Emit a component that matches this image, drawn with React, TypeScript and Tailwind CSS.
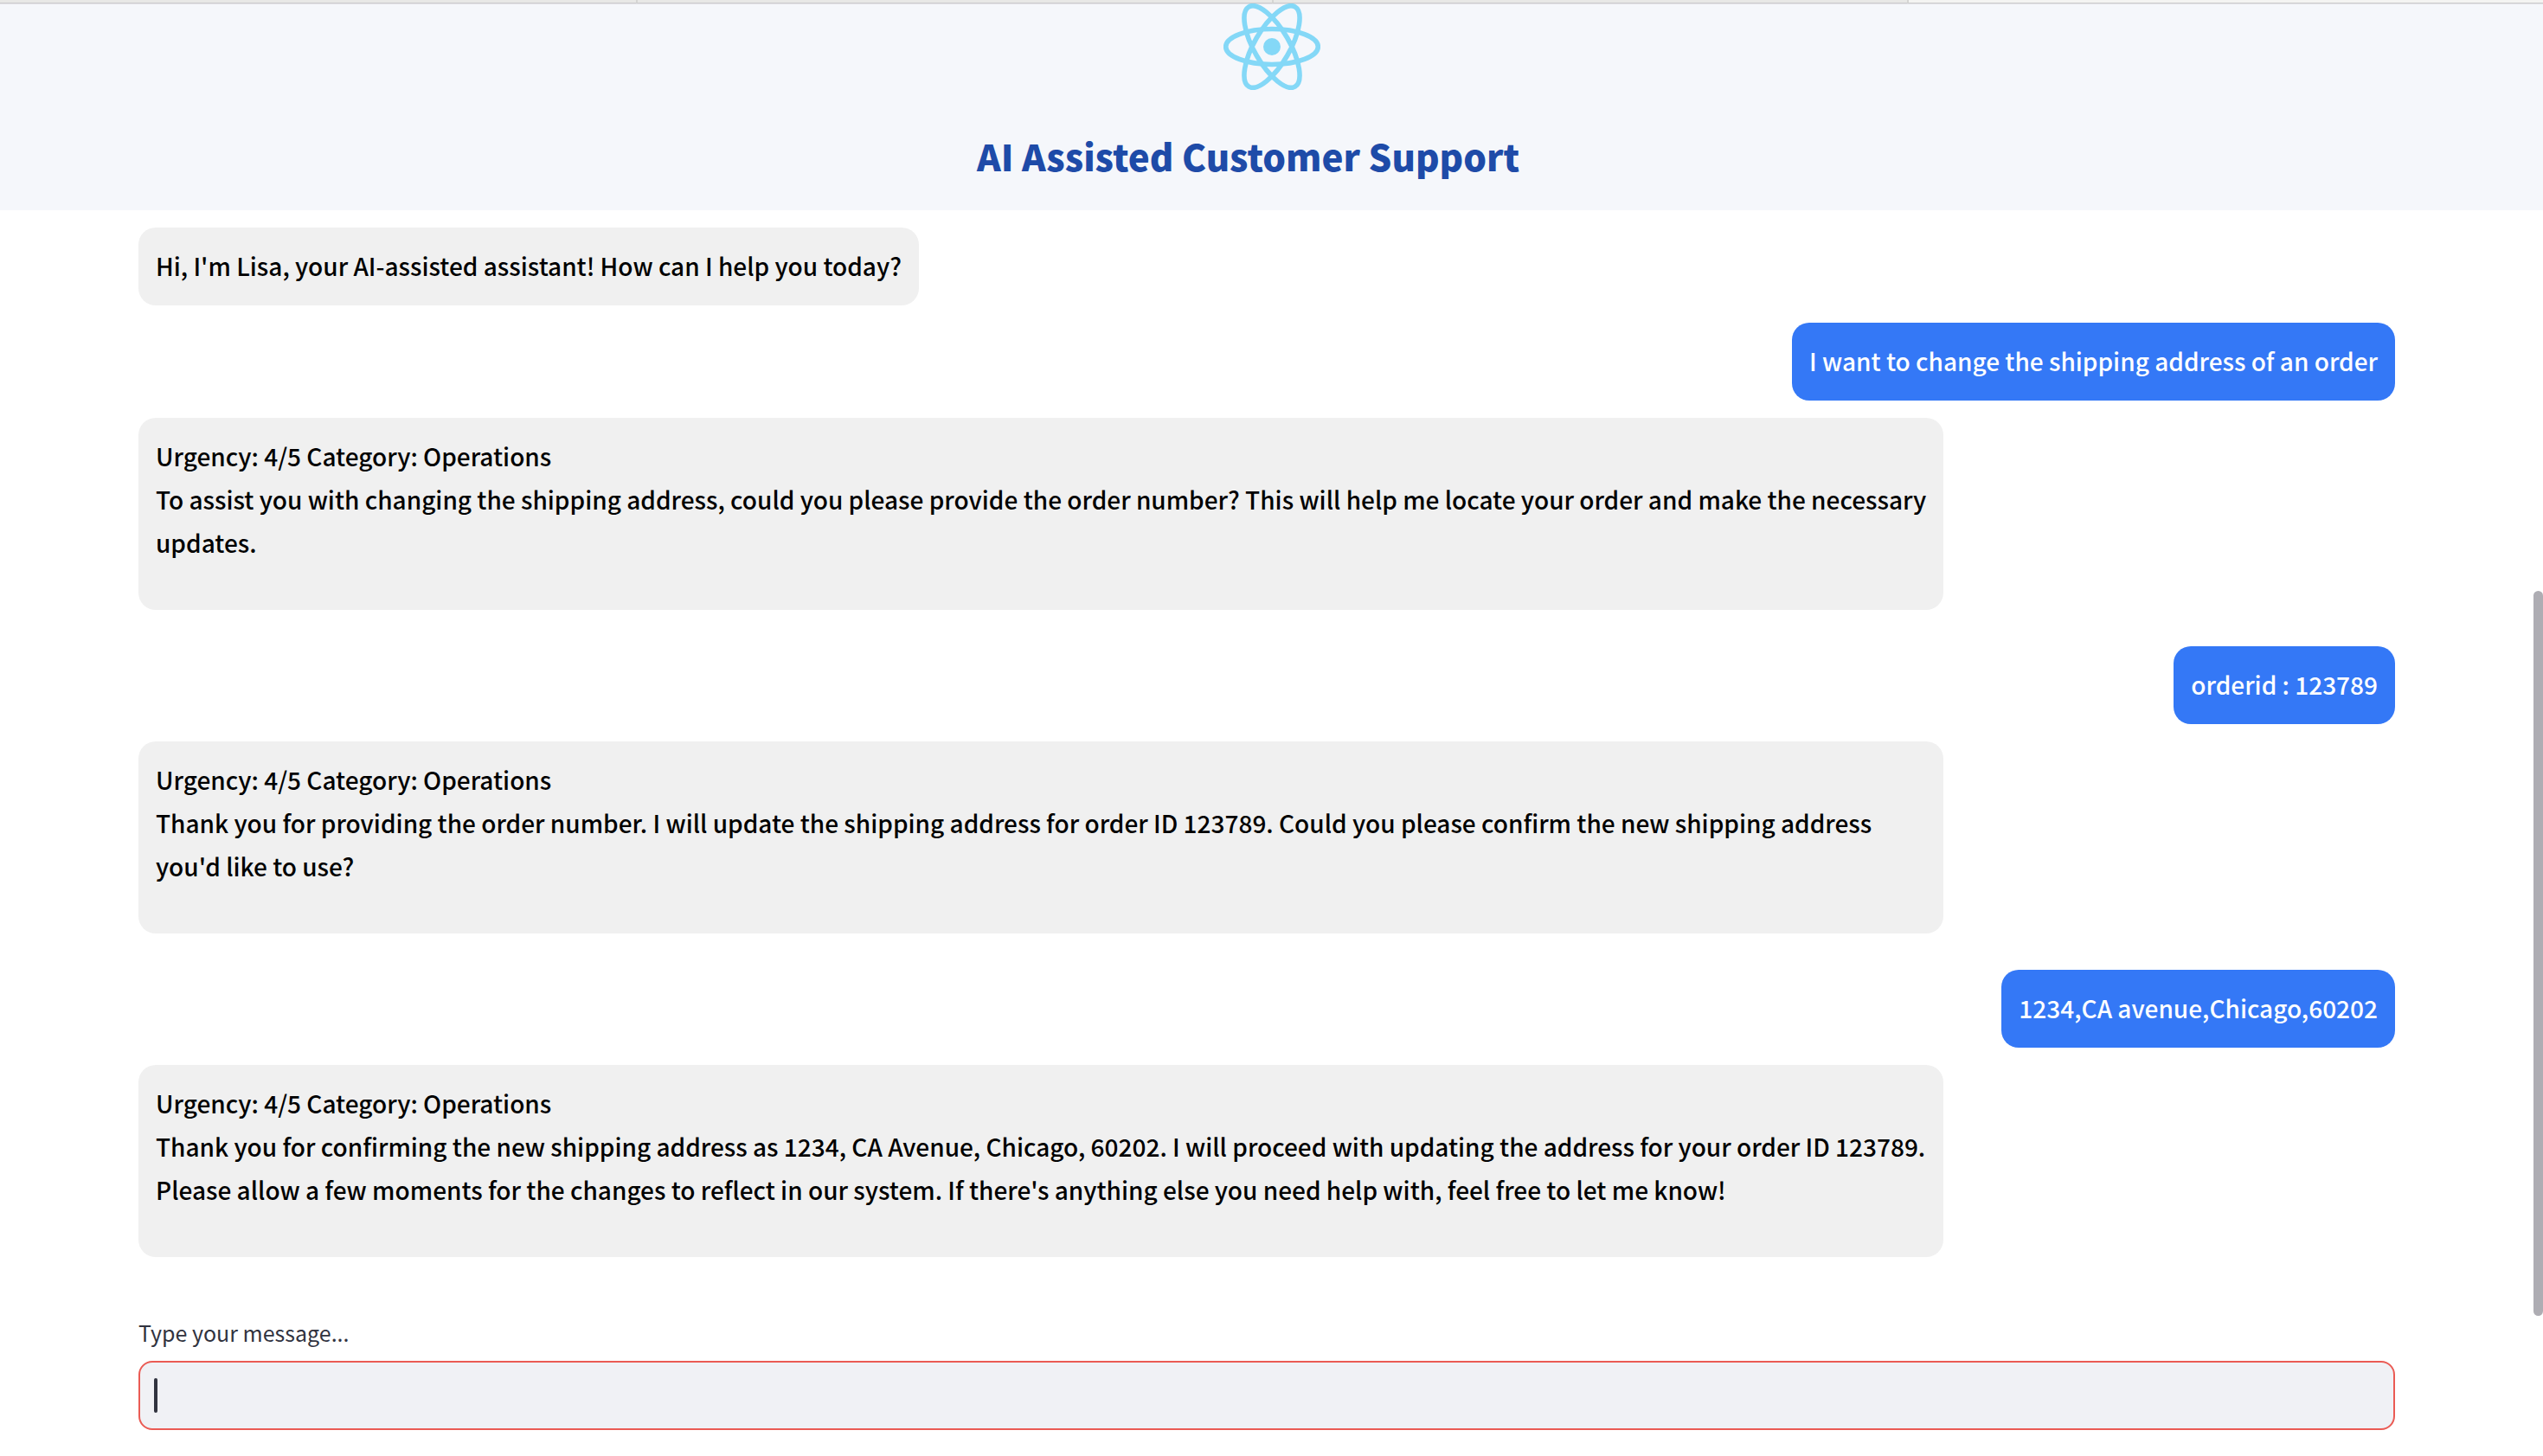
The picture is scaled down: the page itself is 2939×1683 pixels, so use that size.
import { useState } from "react";

type Message = {
  from: "assistant" | "user";
  text: string;
  meta?: string;
};

const messages: Message[] = [
  { from: "assistant", text: "Hi, I'm Lisa, your AI-assisted assistant! How can I help you today?" },
  { from: "user", text: "I want to change the shipping address of an order" },
  {
    from: "assistant",
    meta: "Urgency: 4/5 Category: Operations",
    text: "To assist you with changing the shipping address, could you please provide the order number? This will help me locate your order and make the necessary updates.",
  },
  { from: "user", text: "orderid : 123789" },
  {
    from: "assistant",
    meta: "Urgency: 4/5 Category: Operations",
    text: "Thank you for providing the order number. I will update the shipping address for order ID 123789. Could you please confirm the new shipping address you'd like to use?",
  },
  { from: "user", text: "1234,CA avenue,Chicago,60202" },
  {
    from: "assistant",
    meta: "Urgency: 4/5 Category: Operations",
    text: "Thank you for confirming the new shipping address as 1234, CA Avenue, Chicago, 60202. I will proceed with updating the address for your order ID 123789. Please allow a few moments for the changes to reflect in our system. If there's anything else you need help with, feel free to let me know!",
  },
];

function TabStrip() {
  return (
    <div className="grid h-[5px] grid-cols-4 border-b border-[#e2e2e6]">
      <div className="border-b border-b-[#cbcbcd] bg-[#e8e8e6]" />
      <div className="border-b border-l-2 border-b-[#cbcbcd] border-l-[#d5d5d3] bg-[#e8e8e6]" />
      <div className="border-b border-l-2 border-b-[#cbcbcd] border-l-[#d5d5d3] bg-[#e8e8e6]" />
      <div className="border-b border-l-2 border-b-[#cbcbcd] border-l-[#d5d5d3] bg-[#f4f4f2]" />
    </div>
  );
}

function ReactLogo() {
  return (
    <svg viewBox="-11.5 -10.23 23 20.46" className="-mt-px h-[100px] w-[112px]" role="img" aria-label="React logo">
      <circle r="2.05" fill="#84d8f7" />
      <g fill="none" stroke="#84d8f7" strokeWidth="1.15">
        <ellipse rx="10.95" ry="4.2" />
        <ellipse rx="10.95" ry="4.2" transform="rotate(60)" />
        <ellipse rx="10.95" ry="4.2" transform="rotate(120)" />
      </g>
    </svg>
  );
}

function Bubble({ message }: { message: Message }) {
  if (message.from === "user") {
    return (
      <li className="max-w-4/5 self-end rounded-[20px] bg-[#3478f6] px-5 pt-[19px] pb-[21px] text-white">
        {message.text}
      </li>
    );
  }
  if (message.meta) {
    return (
      <li className="mb-[22px] max-w-4/5 self-start rounded-[20px] bg-[#f0f0f0] pt-[19px] pr-4 pb-[53px] pl-5">
        <p>{message.meta}</p>
        <p>{message.text}</p>
      </li>
    );
  }
  return (
    <li className="max-w-4/5 self-start rounded-[20px] bg-[#f0f0f0] px-5 pt-[19px] pb-[21px]">{message.text}</li>
  );
}

export default function App() {
  const [draft, setDraft] = useState("");

  return (
    <div className="min-h-screen bg-white font-['Noto_Sans_CJK_SC',sans-serif] text-black">
      <TabStrip />
      <header className="flex flex-col items-center bg-[#f5f7fb] pb-[30px]">
        <ReactLogo />
        <h1 className="mt-[42px] pr-[54px] text-[42px] leading-[67px] font-black text-[#1e4ba8]">
          AI Assisted Customer Support
        </h1>
      </header>
      <div className="flex">
        <main className="min-w-0 flex-1 px-40 pt-5">
          <ul className="flex flex-col gap-5 text-[28px] leading-[50px] font-medium">
            {messages.map((message, index) => (
              <Bubble key={index} message={message} />
            ))}
          </ul>
          <form className="mt-[45px] pb-[30px]" onSubmit={(event) => event.preventDefault()}>
            <label htmlFor="message" className="block pb-[13px] text-[25px] leading-10 text-[#31333f]">
              Type your message...
            </label>
            <div className="relative">
              <input
                id="message"
                type="text"
                autoComplete="off"
                value={draft}
                onChange={(event) => setDraft(event.target.value)}
                className="block h-20 w-full rounded-2xl border-2 border-[#ea5b54] bg-[#f0f1f5] px-4 text-[28px] text-[#31333f] caret-transparent outline-none"
              />
              {draft === "" && (
                <span className="pointer-events-none absolute top-5 left-[18px] h-10 w-1 rounded-xs bg-[#31333f]" />
              )}
            </div>
          </form>
        </main>
        <div className="w-[11px] shrink-0 pt-[440px]">
          <div className="h-[838px] rounded-full bg-[#aeadb3]" />
        </div>
      </div>
    </div>
  );
}
